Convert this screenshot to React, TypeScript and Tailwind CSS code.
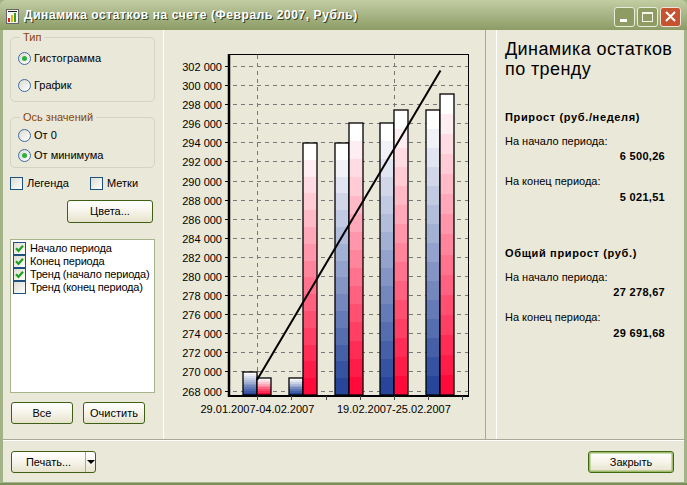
import React from 'react';

const axisValues = [302, 300, 298, 296, 294, 292, 290, 288, 286, 284, 282, 280, 278, 276, 274, 272, 270, 268];
const bottomTicks = [257, 291, 326, 360, 394, 428, 462];
const BASE_Y = 395;

const bars = [
  { x: 243, top: 372, color: [39, 70, 154] },
  { x: 257, top: 378, color: [255, 10, 58] },
  { x: 289, top: 378, color: [39, 70, 154] },
  { x: 303, top: 143, color: [255, 10, 58] },
  { x: 335, top: 143, color: [39, 70, 154] },
  { x: 349, top: 123, color: [255, 10, 58] },
  { x: 380, top: 123, color: [39, 70, 154] },
  { x: 394, top: 110, color: [255, 10, 58] },
  { x: 426, top: 110, color: [39, 70, 154] },
  { x: 440, top: 94, color: [255, 10, 58] }
];

function Bar({ x, top, color }: { x: number; top: number; color: number[] }) {
  const height = BASE_Y - top;
  const count = Math.max(6, Math.min(15, Math.round(height / 2)));
  const step = height / count;
  return (
    <g>
      {Array.from({ length: count }).map((_, i) => {
        // i = 0 is the white band on top of the bar
        const t = i / (count - 1);
        const c = color.map((v) => Math.round(255 + (v - 255) * t));
        return (
          <rect
            key={i}
            x={x}
            y={top + i * step}
            width={14}
            height={step + 1}
            fill={`rgb(${c[0]},${c[1]},${c[2]})`}
            shapeRendering="crispEdges"
          />
        );
      })}
      <rect x={x} y={top} width={14} height={height} fill="none" stroke="#000" strokeWidth={1.3} />
    </g>
  );
}

function Chart() {
  return (
    <svg viewBox="164 30 321 409" className="w-[321px] h-[409px] block">
      {axisValues.map((v, i) => {
        const y = Math.round(66 + i * 19.09) + 0.5;
        return (
          <g key={v}>
            <line x1={225} x2={468} y1={y} y2={y} stroke="#777" strokeDasharray="4 4" />
            <line x1={225} x2={229} y1={y} y2={y} stroke="#000" />
            <text x={222} y={y + 4} textAnchor="end" fontSize={11} fill="#000" fontFamily="'Liberation Sans', sans-serif">
              {v} 000
            </text>
          </g>
        );
      })}
      <line x1={257.5} x2={257.5} y1={55} y2={395} stroke="#777" strokeDasharray="4 4" />
      <line x1={394.5} x2={394.5} y1={55} y2={395} stroke="#777" strokeDasharray="4 4" />
      {bars.map((b) => (
        <Bar key={`${b.x}`} x={b.x} top={b.top} color={b.color} />
      ))}
      <line x1={257} y1={380} x2={440.5} y2={70.5} stroke="#000" strokeWidth={2} />
      <line x1={228} x2={469} y1={54.5} y2={54.5} stroke="#000" />
      <line x1={468.5} x2={468.5} y1={54} y2={396} stroke="#000" />
      <line x1={229} x2={229} y1={54} y2={397} stroke="#000" strokeWidth={2.5} />
      <line x1={228} x2={469} y1={396} y2={396} stroke="#000" strokeWidth={2} />
      {bottomTicks.map((x) => (
        <line key={x} x1={x + 0.5} x2={x + 0.5} y1={396} y2={400} stroke="#444" />
      ))}
      <text x={200.5} y={413} fontSize={11} fill="#000" fontFamily="'Liberation Sans', sans-serif">
        29.01.2007-04.02.2007
      </text>
      <text x={337} y={413} fontSize={11} fill="#000" fontFamily="'Liberation Sans', sans-serif">
        19.02.2007-25.02.2007
      </text>
    </svg>
  );
}

function Radio({ label, checked, className }: { label: string; checked?: boolean; className?: string }) {
  return (
    <div className={`flex items-center gap-[3px] ${className ?? ''}`}>
      <span className="w-[13px] h-[13px] rounded-full border border-[#3b6ba5] bg-gradient-to-br from-[#dcdcd0] to-white flex items-center justify-center shrink-0">
        {checked && <span className="w-[5px] h-[5px] rounded-full bg-[#2eb03e]" />}
      </span>
      <span>{label}</span>
    </div>
  );
}

function CheckBox({ checked }: { checked?: boolean }) {
  return (
    <span className="w-[13px] h-[13px] border border-[#1c5180] bg-gradient-to-br from-[#dcdcd0] to-white flex items-center justify-center shrink-0">
      {checked && (
        <svg viewBox="0 0 11 11" className="w-[11px] h-[11px]">
          <path d="M2 5.2 L4.5 7.8 L9 2.8" fill="none" stroke="#21a121" strokeWidth={2.2} />
        </svg>
      )}
    </span>
  );
}

function XpButton({ children, className, focus }: { children: React.ReactNode; className?: string; focus?: boolean }) {
  return (
    <div
      className={`flex items-center justify-center rounded-[3px] border bg-gradient-to-b from-white via-[#f6f4ea] to-[#e6e2cc] ${
        focus ? 'border-[#3f6a12] shadow-[inset_0_0_0_1.5px_#9cba6a]' : 'border-[#3f5f14]'
      } ${className ?? ''}`}
    >
      {children}
    </div>
  );
}

function StatBlock({ heading, start, end, className }: { heading: string; start: string; end: string; className?: string }) {
  return (
    <div className={className}>
      <div className="h-[14px] leading-[14px] font-bold tracking-[0.65px]">{heading}</div>
      <div className="h-[14px] leading-[14px] mt-[10px]">На начало периода:</div>
      <div className="h-[14px] leading-[14px] mt-[1px] font-bold text-right pr-[19px] tracking-[0.3px]">{start}</div>
      <div className="h-[14px] leading-[14px] mt-[11px]">На конец периода:</div>
      <div className="h-[14px] leading-[14px] mt-[2px] font-bold text-right pr-[19px] tracking-[0.3px]">{end}</div>
    </div>
  );
}

export default function App() {
  return (
    <div className="w-[687px] h-[485px] flex flex-col overflow-hidden bg-[#a3b388] border-b-2 border-[#7f8f5a] font-['Liberation_Sans',sans-serif] text-[11px] text-black">
      {/* Title bar */}
      <div className="h-[30px] shrink-0 flex items-center pl-[6px] pr-[6px] rounded-t-[6px] bg-gradient-to-b from-[#c3cda3] via-[#a7b485] to-[#8d9c66]">
        <svg viewBox="0 0 13 15" className="w-[13px] h-[15px] mt-[2px] shrink-0">
          <rect x={0.5} y={0.5} width={12} height={14} fill="#f4f4f0" stroke="#666" />
          <rect x={2} y={2} width={9} height={1} fill="#222" />
          <rect x={2} y={9} width={2} height={4} fill="#d8281c" />
          <rect x={5} y={6} width={2} height={7} fill="#e8b400" />
          <rect x={8} y={4} width={2} height={9} fill="#2f9e2a" />
        </svg>
        <div className="ml-[5px] text-[12px] font-bold text-white tracking-[0.58px] [text-shadow:1px_1px_0_#33401c]">
          Динамика остатков на счете (Февраль 2007, Рубль)
        </div>
        <div className="ml-auto flex gap-[2px] mt-[3px]">
          <div className="w-[21px] h-[20px] rounded-[3px] border border-[#e8ecd8] bg-[#8e9c64] flex items-end pl-[5px] pb-[4px]">
            <span className="w-[7px] h-[3px] bg-white" />
          </div>
          <div className="w-[21px] h-[20px] rounded-[3px] border border-[#e8ecd8] bg-[#8e9c64] flex items-center justify-center">
            <span className="w-[11px] h-[10px] border border-t-2 border-[#f4f4ea]" />
          </div>
          <div className="w-[21px] h-[20px] rounded-[3px] border border-[#f0e4d8] bg-[#c6532f] flex items-center justify-center">
            <svg viewBox="0 0 11 11" className="w-[11px] h-[11px]">
              <path d="M1 1 L10 10 M10 1 L1 10" stroke="#fff" strokeWidth={2} />
            </svg>
          </div>
        </div>
      </div>

      {/* Window client area */}
      <div className="flex-1 mx-[3px] mb-[1px] flex flex-col bg-[#eae8d8] min-h-0">
        <div className="h-[410px] shrink-0 flex border-b border-[#aca899]">
          {/* Left options panel */}
          <div className="w-[161px] shrink-0 pl-[7px] border-r border-white">
            <fieldset className="w-[145px] h-[72px] border border-[#d4d2c0] rounded-[5px]">
              <legend className="ml-[9px] px-[3px] h-[14px] leading-[14px] text-[#8a4500]">Тип</legend>
              <Radio label="Гистограмма" checked className="ml-[7px] mt-[5px] h-[18px] tracking-[0.15px]" />
              <Radio label="График" className="ml-[7px] mt-[9px] h-[18px]" />
            </fieldset>
            <fieldset className="w-[145px] h-[58px] mt-[8px] border border-[#d4d2c0] rounded-[5px]">
              <legend className="ml-[9px] px-[3px] h-[14px] leading-[14px] text-[#8a4500]">Ось значений</legend>
              <Radio label="От 0" className="ml-[7px] mt-[2px] h-[18px]" />
              <Radio label="От минимума" checked className="ml-[7px] mt-[2px] h-[18px]" />
            </fieldset>
            <div className="flex items-center mt-[8px] h-[14px]">
              <CheckBox />
              <span className="ml-[4px] w-[63px]">Легенда</span>
              <CheckBox />
              <span className="ml-[4px]">Метки</span>
            </div>
            <XpButton className="w-[86px] h-[23px] mt-[10px] ml-[57px]">Цвета...</XpButton>
            <div className="w-[145px] h-[154px] mt-[16px] bg-white border border-[#a5b58c] pt-[2px] pl-[2px]">
              {[
                { label: 'Начало периода', checked: true },
                { label: 'Конец периода', checked: true },
                { label: 'Тренд (начало периода)', checked: true },
                { label: 'Тренд (конец периода)', checked: false }
              ].map((item) => (
                <div key={item.label} className="flex items-center h-[13px]">
                  <CheckBox checked={item.checked} />
                  <span className="ml-[4px] whitespace-nowrap tracking-[-0.18px]">{item.label}</span>
                </div>
              ))}
            </div>
            <div className="flex mt-[9px] ml-[1px] gap-[10px]">
              <XpButton className="w-[62px] h-[22px]">Все</XpButton>
              <XpButton className="w-[62px] h-[22px]">Очистить</XpButton>
            </div>
          </div>

          {/* Chart panel */}
          <div className="w-[321px] shrink-0">
            <Chart />
          </div>

          {/* Splitter strip */}
          <div className="w-[12px] shrink-0 border-l border-[#aca899] border-r border-r-white" />

          {/* Trend summary panel */}
          <div className="flex-1 pl-[8px] pt-[9px] min-w-0">
            <div className="text-[18px] leading-[20px] tracking-[0.4px]">
              Динамика остатков
              <br />
              по тренду
            </div>
            <StatBlock heading="Прирост (руб./неделя)" start="6 500,26" end="5 021,51" className="mt-[31px]" />
            <StatBlock heading="Общий прирост (руб.)" start="27 278,67" end="29 691,68" className="mt-[42px]" />
          </div>
        </div>

        {/* Footer */}
        <div className="flex-1 border-t border-white flex justify-between items-start pl-[8px] pr-[10px] pt-[10px]">
          <div className="w-[85px] h-[22px] flex rounded-[3px] border border-[#3f5f14] bg-gradient-to-b from-white via-[#f6f4ea] to-[#e6e2cc]">
            <div className="w-[74px] flex items-center justify-center border-r border-[#aca899]">Печать...</div>
            <div className="flex-1 flex items-center justify-center">
              <span className="w-0 h-0 border-l-[4px] border-r-[4px] border-t-[4px] border-l-transparent border-r-transparent border-t-black" />
            </div>
          </div>
          <XpButton focus className="w-[86px] h-[22px]">Закрыть</XpButton>
        </div>
      </div>
    </div>
  );
}
